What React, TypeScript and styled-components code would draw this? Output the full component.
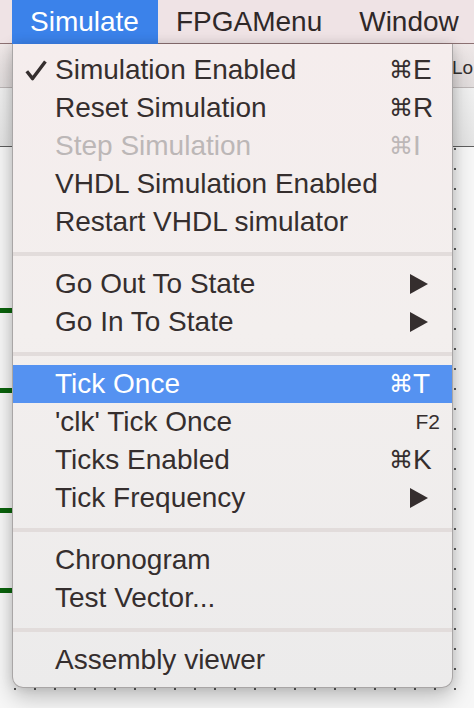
import React from "react"
import styled, { createGlobalStyle } from "styled-components"

const GlobalStyle = createGlobalStyle`
  html, body {
    margin: 0;
    padding: 0;
    background: #f6f6f6;
  }
  * {
    box-sizing: border-box;
  }
`

const FONT = `"Liberation Sans", "DejaVu Sans", Arial, sans-serif`

type Shortcut = { mod?: string; key: string; small?: boolean }

type Entry =
  | { kind: "separator" }
  | {
      kind: "item"
      label: string
      shortcut?: Shortcut
      checked?: boolean
      disabled?: boolean
      submenu?: boolean
      active?: boolean
    }

const entries: Entry[] = [
  { kind: "item", label: "Simulation Enabled", checked: true, shortcut: { mod: "⌘", key: "E" } },
  { kind: "item", label: "Reset Simulation", shortcut: { mod: "⌘", key: "R" } },
  { kind: "item", label: "Step Simulation", disabled: true, shortcut: { mod: "⌘", key: "I" } },
  { kind: "item", label: "VHDL Simulation Enabled" },
  { kind: "item", label: "Restart VHDL simulator" },
  { kind: "separator" },
  { kind: "item", label: "Go Out To State", submenu: true },
  { kind: "item", label: "Go In To State", submenu: true },
  { kind: "separator" },
  { kind: "item", label: "Tick Once", active: true, shortcut: { mod: "⌘", key: "T" } },
  { kind: "item", label: "'clk' Tick Once", shortcut: { key: "F2", small: true } },
  { kind: "item", label: "Ticks Enabled", shortcut: { mod: "⌘", key: "K" } },
  { kind: "item", label: "Tick Frequency", submenu: true },
  { kind: "separator" },
  { kind: "item", label: "Chronogram" },
  { kind: "item", label: "Test Vector..." },
  { kind: "separator" },
  { kind: "item", label: "Assembly viewer" },
]

const menuTitles = ["Simulate", "FPGAMenu", "Window"]

// green wires poking out on the left of the canvas (y relative to canvas top)
const wires = [161, 241, 361, 441]

const CheckIcon = () => (
  <svg width="22" height="22" viewBox="0 0 22 22">
    <path d="M1.8 12.2 L7.6 19.6 L20.4 2.6" fill="none" stroke="currentColor" strokeWidth="3.4" strokeLinejoin="round" />
  </svg>
)

const SubmenuArrow = () => (
  <svg width="18" height="20" viewBox="0 0 18 20">
    <polygon points="0,0 18,10 0,20" fill="currentColor" />
  </svg>
)

export default function App() {
  return (
    <>
      <GlobalStyle />
      <Screen>
        <MenuBar>
          {menuTitles.map((title, i) => (
            <MenuTitle key={title} open={i === 0}>
              {title}
            </MenuTitle>
          ))}
        </MenuBar>
        <AppWindow>
          <Toolbar>
            <ToolbarSpacer />
            <ToolbarLabel>Lo</ToolbarLabel>
          </Toolbar>
          <TabStrip />
          <Canvas>
            {wires.map((y) => (
              <Wire key={y} style={{ top: y }} />
            ))}
          </Canvas>
        </AppWindow>
        <DropMenu>
          {entries.map((entry, i) => {
            if (entry.kind === "separator") return <Separator key={i} />
            return (
              <MenuRow key={i} active={entry.active} disabled={entry.disabled}>
                <CheckCol>{entry.checked && <CheckIcon />}</CheckCol>
                <RowLabel>{entry.label}</RowLabel>
                <Accessory>
                  {entry.submenu && (
                    <ArrowBox>
                      <SubmenuArrow />
                    </ArrowBox>
                  )}
                  {entry.shortcut &&
                    (entry.shortcut.small ? (
                      <FnKey>{entry.shortcut.key}</FnKey>
                    ) : (
                      <>
                        <Modifier>{entry.shortcut.mod}</Modifier>
                        <KeyChar>{entry.shortcut.key}</KeyChar>
                      </>
                    ))}
                </Accessory>
              </MenuRow>
            )
          })}
        </DropMenu>
      </Screen>
    </>
  )
}

const Screen = styled.div`
  position: relative;
  width: 474px;
  height: 708px;
  overflow: hidden;
  display: flex;
  flex-direction: column;
  font-family: ${FONT};
  background: #f6f6f6;
`

const MenuBar = styled.div`
  display: flex;
  flex: 0 0 44px;
  padding-left: 12px;
  background: #efe3e5;
  box-shadow: inset 0 -1px 0 #8c7173;
`

const MenuTitle = styled.div<{ open?: boolean }>`
  display: flex;
  align-items: center;
  height: 44px;
  padding: 0 19px 1px 18px;
  font-size: 28px;
  white-space: nowrap;
  color: ${(p) => (p.open ? "#ffffff" : "#2f2828")};
  background: ${(p) => (p.open ? "#3b82ea" : "transparent")};
`

const AppWindow = styled.div`
  flex: 1;
  display: flex;
  flex-direction: column;
`

const Toolbar = styled.div`
  display: flex;
  align-items: center;
  flex: 0 0 44px;
  overflow: hidden;
  background: linear-gradient(180deg, #efe8e8 0%, #e2dddd 100%);
  border-bottom: 1px solid #bdb7b7;
`

const ToolbarSpacer = styled.div`
  flex: 0 0 452px;
`

const ToolbarLabel = styled.div`
  font-size: 19px;
  color: #333030;
  white-space: nowrap;
  padding-top: 4px;
`

const TabStrip = styled.div`
  flex: 0 0 59px;
  background: linear-gradient(180deg, #f1f1f1 0%, #e4e4e4 100%);
  border-bottom: 1px solid #5f5f5f;
`

const Canvas = styled.div`
  position: relative;
  flex: 1;
  background-color: #f7f7f7;
  background-image: radial-gradient(circle at 1px 1px, #5a5a5a 1.1px, transparent 1.3px);
  background-size: 20px 20px;
  background-position: 14px 1px;
`

const Wire = styled.div`
  position: absolute;
  left: 0;
  width: 60px;
  height: 5px;
  background: #0b640d;
`

const DropMenu = styled.div`
  position: absolute;
  top: 44px;
  left: 12px;
  width: 441px;
  height: 644px;
  display: flex;
  flex-direction: column;
  padding: 7px 0 9px;
  background: linear-gradient(180deg, #f5eded 0%, #f3efee 45%, #ecebeb 100%);
  border: 1px solid #a9a6a6;
  border-top: none;
  border-radius: 0 0 11px 11px;
  box-shadow: 0 10px 22px rgba(0, 0, 0, 0.22), 0 0 12px rgba(0, 0, 0, 0.12);
`

const MenuRow = styled.div<{ active?: boolean; disabled?: boolean }>`
  display: flex;
  align-items: center;
  height: 38px;
  flex: 0 0 38px;
  font-size: 28px;
  line-height: 38px;
  white-space: nowrap;
  background: ${(p) => (p.active ? "#5592f1" : "transparent")};
  color: ${(p) => (p.active ? "#ffffff" : p.disabled ? "#bcb7b7" : "#352e2e")};
`

const CheckCol = styled.div`
  flex: 0 0 42px;
  display: flex;
  align-items: center;
  padding-left: 12px;
  padding-bottom: 1px;
`

const RowLabel = styled.div`
  flex: 1;
`

const Accessory = styled.div`
  flex: 0 0 54px;
  margin-right: 9px;
  display: flex;
  align-items: center;
`

const Modifier = styled.span`
  flex: 0 0 23px;
  font-family: "DejaVu Sans", sans-serif;
  font-size: 24px;
`

const KeyChar = styled.span`
  flex: 1;
`

const FnKey = styled.span`
  flex: 1;
  text-align: right;
  padding-right: 3px;
  font-size: 21px;
`

const ArrowBox = styled.span`
  display: flex;
  padding-left: 21px;
`

const Separator = styled.div`
  flex: 0 0 4px;
  margin: 11px 0 9px;
  background: #e2dcdb;
`
